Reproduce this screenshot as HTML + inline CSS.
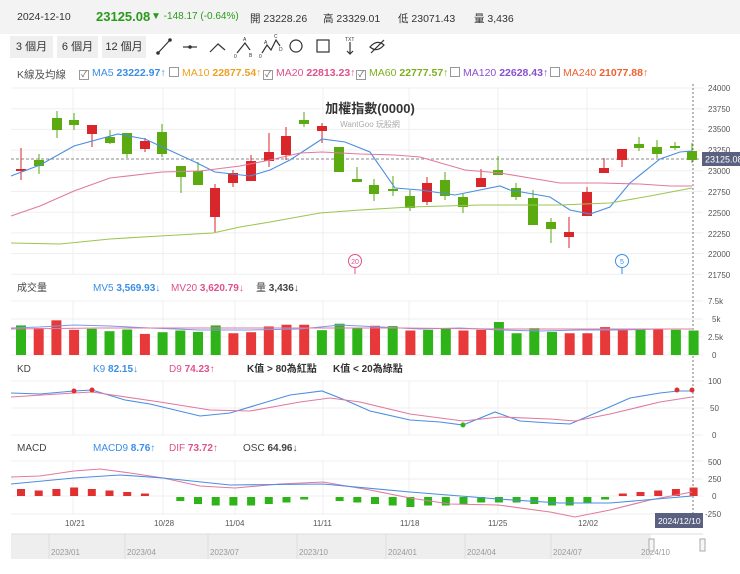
<!DOCTYPE html>
<html><head><meta charset="utf-8">
<style>
body{margin:0;width:740px;height:574px;background:#fff;font-family:"Liberation Sans","Noto Sans CJK TC",sans-serif;overflow:hidden;position:relative}
.hdr{position:absolute;left:0;top:0;width:740px;height:34px;background:#f3f3f3;font-size:10.5px;color:#333}
.hdr span{position:absolute;top:11px}
.btn{position:absolute;top:36px;height:22px;background:#efefef;font-size:11px;color:#333;line-height:22px;text-align:center}
.lg{position:absolute;top:67px;font-size:10.5px;white-space:nowrap}
.cb{display:inline-block;width:8px;height:8px;border:1px solid #999;vertical-align:-1px;margin-right:3px;font-size:8px;line-height:8px;text-align:center;color:#555}
svg{position:absolute;left:0;top:0}
text{font-family:"Liberation Sans","Noto Sans CJK TC",sans-serif}
</style></head><body>
<div class="hdr">
<span style="left:17px">2024-12-10</span>
<span style="left:96px;top:9px;font-size:13px;font-weight:bold;color:#2a9a1a">23125.08</span>
<span style="left:151px;color:#2a9a1a;font-size:10px">▼ -148.17 (-0.64%)</span>
<span style="left:250px">開 23228.26</span>
<span style="left:323px">高 23329.01</span>
<span style="left:398px">低 23071.43</span>
<span style="left:474px">量 3,436</span>
</div>
<div class="btn" style="left:10px;width:43px">3 個月</div>
<div class="btn" style="left:57px;width:41px">6 個月</div>
<div class="btn" style="left:102px;width:44px">12 個月</div>
<svg width="740" height="574" viewBox="0 0 740 574">
<g stroke="#333" fill="none" stroke-width="1.2">
<path d="M158 53 L170 40"/><circle cx="158" cy="53" r="1.2" fill="#333"/><circle cx="170" cy="40" r="1.2" fill="#333"/>
<path d="M183 47 H197"/><circle cx="190" cy="47" r="1.2" fill="#333"/>
<path d="M210 52 L218 44 L225 50"/>
<path d="M237 53 L245 43 L250 50"/>
<path d="M262 53 L267 45 L271 50 L276 40 L280 46"/>
<circle cx="296" cy="46" r="6"/>
<rect x="317" y="40" width="12" height="12"/>
<path d="M350 42 V54 M347 51 L350 54 L353 51"/>
<path d="M370 47 Q377 39 384 45 Q377 53 370 47 Z M371 53 L384 40"/>
</g>
<text x="243" y="41" font-size="5" fill="#333">A</text><text x="234" y="58" font-size="5" fill="#333">0</text><text x="249" y="57" font-size="5" fill="#333">B</text>
<text x="274" y="38" font-size="5" fill="#333">C</text><text x="264" y="44" font-size="5" fill="#333">A</text><text x="259" y="58" font-size="5" fill="#333">0</text><text x="279" y="51" font-size="5" fill="#333">D</text>
<text x="345" y="41" font-size="5" fill="#333">TXT</text>
<g id="grid" stroke="#eee" stroke-width="1"></g>
<g id="ch"></g>
<g font-size="8" fill="#555">
<text x="708" y="91">24000</text><text x="708" y="112">23750</text><text x="708" y="132">23500</text><text x="708" y="153">23250</text>
<text x="708" y="174">23000</text><text x="708" y="195">22750</text><text x="708" y="216">22500</text><text x="708" y="237">22250</text>
<text x="708" y="257">22000</text><text x="708" y="278">21750</text>
<text x="708" y="304">7.5k</text><text x="712" y="322">5k</text><text x="708" y="340">2.5k</text><text x="712" y="358">0</text>
<text x="708" y="384">100</text><text x="710" y="411">50</text><text x="712" y="438">0</text>
<text x="708" y="465">500</text><text x="708" y="482">250</text><text x="712" y="499">0</text><text x="705" y="517">-250</text>
<text x="65" y="526">10/21</text><text x="154" y="526">10/28</text><text x="225" y="526">11/04</text><text x="313" y="526">11/11</text>
<text x="400" y="526">11/18</text><text x="488" y="526">11/25</text><text x="578" y="526">12/02</text>
</g>
<rect x="702" y="152" width="38" height="14" fill="#5a6080"/>
<text x="705" y="162.5" font-size="9" fill="#fff">23125.08</text>
<text x="370" y="113" font-size="13" font-weight="bold" fill="#333" text-anchor="middle">加權指數(0000)</text>
<text x="370" y="127" font-size="8" fill="#aaa" text-anchor="middle">WantGoo 玩股網</text>
<circle cx="355" cy="261" r="6.5" fill="#fff" stroke="#e0508a"/><text x="355" y="264" font-size="7" fill="#e0508a" text-anchor="middle">20</text><path d="M355 268V274" stroke="#e0508a"/>
<circle cx="622" cy="261" r="6.5" fill="#fff" stroke="#3a8ee6"/><text x="622" y="264" font-size="7" fill="#3a8ee6" text-anchor="middle">5</text><path d="M622 268V274" stroke="#3a8ee6"/>
<g font-size="10">
<text x="17" y="291" fill="#444">成交量</text>
<text x="93" y="291" fill="#3a8ee6">MV5 <tspan font-weight="bold">3,569.93</tspan>↓</text>
<text x="171" y="291" fill="#e0508a">MV20 <tspan font-weight="bold">3,620.79</tspan>↓</text>
<text x="256" y="291" fill="#444">量 <tspan font-weight="bold">3,436</tspan>↓</text>
<text x="17" y="372" fill="#444">KD</text>
<text x="93" y="372" fill="#3a8ee6">K9 <tspan font-weight="bold">82.15</tspan>↓</text>
<text x="169" y="372" fill="#e0508a">D9 <tspan font-weight="bold">74.23</tspan>↑</text>
<text x="247" y="372" fill="#333" font-weight="bold">K值 &gt; 80為紅點</text>
<text x="333" y="372" fill="#333" font-weight="bold">K值 &lt; 20為綠點</text>
<text x="17" y="451" fill="#444">MACD</text>
<text x="93" y="451" fill="#3a8ee6">MACD9 <tspan font-weight="bold">8.76</tspan>↑</text>
<text x="169" y="451" fill="#e0508a">DIF <tspan font-weight="bold">73.72</tspan>↑</text>
<text x="243" y="451" fill="#444">OSC <tspan font-weight="bold">64.96</tspan>↓</text>
</g>
<rect x="655" y="513" width="48" height="15" fill="#5a6080"/>
<text x="658" y="524" font-size="8.5" fill="#fff">2024/12/10</text>
<rect x="11" y="534" width="692" height="25" fill="#eee"/>
<rect x="651" y="534" width="52" height="25" fill="#fff"/>
<path d="M11 534H703" stroke="#ddd"/>
<g stroke="#ddd"><path d="M49 534V559M125 534V559M208 534V559M297 534V559M386 534V559M465 534V559M551 534V559"/></g>
<g font-size="8" fill="#999">
<text x="51" y="555">2023/01</text><text x="127" y="555">2023/04</text><text x="210" y="555">2023/07</text><text x="299" y="555">2023/10</text>
<text x="388" y="555">2024/01</text><text x="467" y="555">2024/04</text><text x="553" y="555">2024/07</text><text x="641" y="555">2024/10</text>
</g>
<rect x="649" y="539" width="5" height="12" fill="#f6f6f6" stroke="#aaa"/><rect x="700" y="539" width="5" height="12" fill="#f6f6f6" stroke="#aaa"/>
</svg>
<div class="lg" style="left:17px;color:#555">K線及均線</div>
<div class="lg" style="left:79px;color:#3a8ee6"><span class="cb">✓</span>MA5 <b>23222.97</b>↑</div>
<div class="lg" style="left:169px;color:#f0a020"><span class="cb"></span>MA10 <b>22877.54</b>↑</div>
<div class="lg" style="left:263px;color:#e0508a"><span class="cb">✓</span>MA20 <b>22813.23</b>↑</div>
<div class="lg" style="left:356px;color:#7ab020"><span class="cb">✓</span>MA60 <b>22777.57</b>↑</div>
<div class="lg" style="left:450px;color:#8a50d0"><span class="cb"></span>MA120 <b>22628.43</b>↑</div>
<div class="lg" style="left:550px;color:#f06030"><span class="cb"></span>MA240 <b>21077.88</b>↑</div>
<script>
var NS="http://www.w3.org/2000/svg";
function el(p,t,a){var e=document.createElementNS(NS,t);for(var k in a)e.setAttribute(k,a[k]);p.appendChild(e);return e;}
var g=document.getElementById('grid'),c=document.getElementById('ch');
var G='#efefef';
for(var i=0;i<10;i++){var y=88+i*20.7;el(g,'path',{d:'M11 '+y+'H703',stroke:G});}
[301,319,337,355].forEach(function(y){el(g,'path',{d:'M11 '+y+'H703',stroke:G});});
[381,408,435].forEach(function(y){el(g,'path',{d:'M11 '+y+'H703',stroke:G});});
[461,479,496,514].forEach(function(y){el(g,'path',{d:'M11 '+y+'H703',stroke:G});});
[73,163,235,323,409,498,587].forEach(function(x){el(g,'path',{d:'M'+x+' 88V274M'+x+' 301V355M'+x+' 381V435M'+x+' 461V514',stroke:G});});
el(g,'path',{d:'M693 84V514',stroke:'#777','stroke-dasharray':'2,2'});
el(g,'path',{d:'M11 159H700',stroke:'#888','stroke-dasharray':'3,2'});
var R='#d9262b',GR='#5aaa10';
var C=[[21,'r',169,171,148,180],[39,'g',160,166,154,174],[57,'g',118,130,111,138],[74,'g',120,125,113,130],[92,'r',125,134,125,147],[110,'g',137,143,130,144],[127,'g',133,154,133,158],[145,'r',141,149,138,152],[162,'g',132,154,124,157],[181,'g',166,177,166,193],[198,'g',171,185,162,185],[215,'r',188,217,184,233],[233,'r',173,183,170,187],[251,'r',161,181,155,181],[269,'r',152,161,133,167],[286,'r',136,155,127,160],[304,'g',120,124,112,127],[322,'r',126,131,123,143],[339,'g',147,172,147,172],[357,'g',179,182,167,182],[374,'g',185,194,179,201],[393,'g',189,191,176,196],[410,'g',196,208,190,211],[427,'r',183,202,177,205],[445,'g',180,196,172,200],[463,'g',197,207,194,213],[481,'r',178,187,169,187],[498,'g',170,175,156,175],[516,'g',188,197,183,200],[533,'g',198,225,190,225],[551,'g',222,229,218,243],[569,'r',232,237,217,248],[587,'r',192,216,187,216],[604,'r',168,173,158,173],[622,'r',149,160,149,167],[639,'g',144,148,137,151],[657,'g',147,154,140,158],[675,'g',146,148,142,150],[692,'g',151,160,143,163]];
C.forEach(function(d){var col=d[1]=='r'?R:GR;el(c,'path',{d:'M'+d[0]+' '+d[4]+'V'+d[5],stroke:col});el(c,'rect',{x:d[0]-5,y:d[2],width:10,height:Math.max(1.5,d[3]-d[2]),fill:col});});
function line(pts,col,w){el(c,'polyline',{points:pts.map(function(p){return p.join(',');}).join(' '),fill:'none',stroke:col,'stroke-width':w||1.1});}
line([[11,176],[40,165],[74,146],[118,134],[145,139],[195,162],[215,172],[250,176],[270,170],[290,160],[322,139],[345,142],[370,152],[395,188],[420,190],[455,195],[470,192],[500,186],[510,190],[550,197],[570,210],[590,214],[610,207],[630,183],[660,159],[680,152],[692,151]],'#4a8ee0');
line([[11,216],[40,206],[74,191],[110,178],[162,172],[200,171],[240,166],[270,160],[300,153],[322,152],[360,154],[395,155],[420,157],[465,170],[500,173],[560,183],[600,183],[640,184],[670,186],[692,186]],'#e07aa0');
line([[11,243],[60,244],[110,239],[160,236],[213,233],[240,227],[270,222],[320,213],[360,210],[410,207],[480,205],[560,205],[610,203],[650,196],[692,188]],'#9ac650');
var VH=[87,79,102,74,77,70,75,62,67,72,68,87,64,67,84,89,89,73,92,79,86,85,72,74,79,72,74,97,64,79,68,64,64,82,74,76,76,74,72];
var VC='grrrgggrggggrrrrrgggrgrggrrggggrrrrgrg'+'g';
VH.forEach(function(h,i){var x=21+i*17.7,hh=h*0.34;el(c,'rect',{x:x-5,y:355-hh,width:10,height:hh,fill:VC[i]=='r'?'#e8393a':'#2eb318'});});
line([[11,328],[40,327],[74,325],[110,326],[150,328],[200,330],[250,330],[300,329],[340,325],[380,327],[420,329],[460,328],[500,330],[540,331],[580,330],[620,330],[660,329],[692,329]],'#7a9ae8',1);
line([[11,329],[100,328],[200,328],[300,328],[400,328],[500,329],[600,329],[692,329]],'#e07aa0',1);
line([[11,393],[40,394],[74,391],[92,390],[125,400],[150,404],[200,416],[230,413],[260,404],[290,395],[322,391],[345,400],[370,411],[410,420],[440,422],[463,425],[495,412],[520,421],[550,423],[570,424],[605,409],[630,398],[660,393],[678,391],[692,391]],'#4a8ee0');
line([[11,397],[74,393],[92,392],[160,402],[210,410],[250,411],[300,402],[330,398],[360,402],[410,414],[463,421],[500,417],[550,419],[575,421],[610,414],[660,402],[692,397]],'#e07aa0');
[[74,391],[92,390],[677,390],[692,390]].forEach(function(p){el(c,'circle',{cx:p[0],cy:p[1],r:2.5,fill:'#e03030'});});
el(c,'circle',{cx:463,cy:425,r:2.5,fill:'#2eb318'});
var O=[4,3,4,5,4,3,2,1,0,-2,-4,-5,-5,-5,-4,-3,-1,0,-2,-3,-4,-5,-6,-5,-5,-4,-3,-3,-3,-4,-5,-5,-3,-1,1,2,3,4,5];
O.forEach(function(v,i){var x=21+i*17.7;if(v==0)return;var h=Math.abs(v)*1.5+1;el(c,'rect',{x:x-4,y:v>0?496-h:497,width:8,height:h,fill:v>0?'#e03030':'#2eb318'});});
line([[11,477],[40,476],[74,471],[100,469],[130,473],[163,478],[200,486],[235,488],[280,484],[323,482],[370,490],[410,498],[450,504],[498,505],[550,512],[575,517],[610,510],[650,500],[692,492]],'#e07aa0');
line([[11,484],[74,478],[120,475],[163,478],[230,485],[323,484],[410,492],[498,499],[560,503],[610,503],[692,496]],'#4a8ee0');
</script>
</body></html>
